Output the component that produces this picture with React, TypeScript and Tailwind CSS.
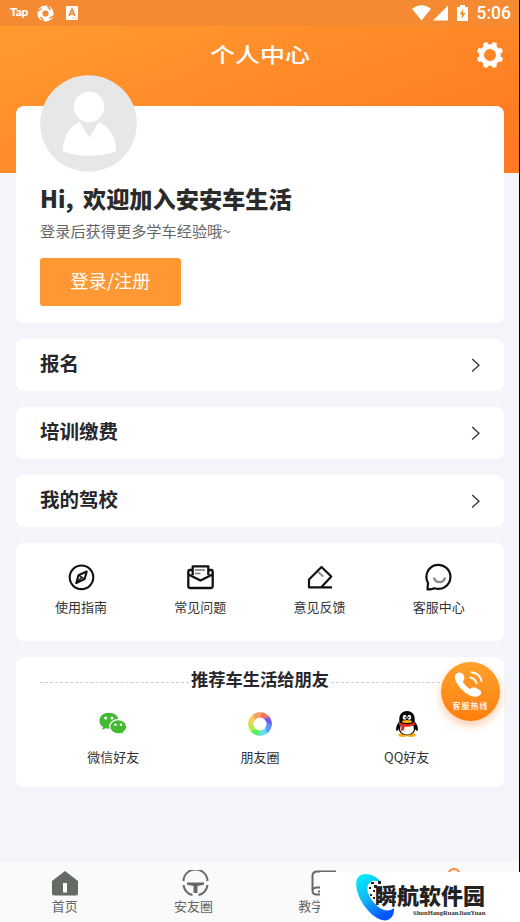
import type { ReactNode } from "react"

const menuItems = ["报名", "培训缴费", "我的驾校"]

const CompassIcon = () => (
    <svg width="28" height="28" viewBox="0 0 28 28" fill="none" stroke="#111" strokeWidth="2.1" strokeLinejoin="round">
        <circle cx="14.5" cy="14.3" r="11.8" />
        <path d="M19.700 8.500 17.600 16 9.300 20 11.500 12.200Z" />
        <path d="M11.500 12.200 17.600 16M15 14 9.300 20" strokeWidth="1.400" />
    </svg>
)

const MailIcon = () => (
    <svg width="28" height="28" viewBox="0 0 28 28" fill="none" stroke="#111" strokeWidth="2.3" strokeLinejoin="round">
        <path d="M6 7H4Q2.300 7 2.300 9V23Q2.300 25 4.300 25H24.700Q26.700 25 26.700 23V9Q26.700 7 25 7H23" />
        <path d="M6.700 12V3.300H22.300V12M2.500 11.500 14.500 17.500 26.500 11.500" />
        <path d="M9 7H19M9 10.500H14.500" stroke="#777" strokeWidth="1.3" />
    </svg>
)

const EraserIcon = () => (
    <svg width="28" height="28" viewBox="0 0 28 28" fill="none" stroke="#111" strokeWidth="2.2" strokeLinejoin="round">
        <path d="M26 24.300H3V16.500L15.500 4 25.300 13.500 15.300 24.300" />
        <path d="M12.300 9 17.300 13.700" stroke="#888" strokeWidth="1.800" />
    </svg>
)

const ChatIcon = () => (
    <svg width="28" height="28" viewBox="0 0 28 28" fill="none" stroke="#111" strokeWidth="2.2" strokeLinejoin="round">
        <path d="M2.500 26.400 3 19.800A12 12 0 1 1 9.500 25.200Q6 26.700 2.500 26.400Z" />
        <path d="M9 14.500A5.600 5.600 0 0 0 20 14.500" stroke="#888" strokeWidth="2.3" />
    </svg>
)

const WechatIcon = () => (
    <svg width="30" height="28" viewBox="0 0 30 28">
        <path d="M11 2.800C5.200 2.800 1.400 6.300 1.400 10.800c0 2.600 1.300 4.800 3.600 6.300L4.100 20l3.600-1.800c1.100.3 2.200.5 3.300.5 5.400 0 9.500-3.600 9.500-8.100S16.500 2.800 11 2.800Z" fill="#43b934" />
        <path d="M20.200 9.700c-4.900 0-8.500 3.100-8.500 7s3.600 7.200 8.500 7.200c1 0 1.900-.1 2.700-.4l3.200 1.700-.9-2.900c2.100-1.300 3.500-3.300 3.500-5.600 0-3.900-3.600-7-8.500-7Z" fill="#43b934" stroke="white" strokeWidth="1.200" />
        <circle cx="7.600" cy="8" r="1.500" fill="white" />
        <circle cx="14" cy="8" r="1.500" fill="white" />
        <circle cx="17.400" cy="14.800" r="1.300" fill="white" />
        <circle cx="23" cy="14.800" r="1.300" fill="white" />
    </svg>
)

const MomentsIcon = () => {
    const blades = ["#f27563", "#7657e8", "#5b98f4", "#62def2", "#58ee62", "#b9e955", "#f0d35b", "#f8a15f"]
    return (
        <svg width="28" height="28" viewBox="0 0 28 28">
            {blades.map((color, i) => (
                <path key={color} d="M14 2.300A11.700 11.700 0 0 1 22.270 5.730L15.400 8.700 11.250 9.240Z" fill={color} stroke={color} strokeWidth=".3" transform={`rotate(${45 * i + 10} 14 14)`} />
            ))}
            <circle cx="14" cy="14" r="6.500" fill="white" />
        </svg>
    )
}

const PenguinIcon = () => (
    <svg width="28" height="28" viewBox="0 0 28 28">
        <ellipse cx="9.700" cy="25" rx="4.300" ry="1.900" fill="#f9ad10" />
        <ellipse cx="18.300" cy="25" rx="4.300" ry="1.900" fill="#f9ad10" />
        <path d="M14 1C8.700 1 6.300 4.700 6.300 9v2.500C3.900 14.300 2.300 18.200 3.500 21c.9 0 1.700-1 2.200-2 .7 4 4 6.200 8.300 6.200s7.600-2.200 8.300-6.200c.5 1 1.300 2 2.200 2 1.200-2.800-.4-6.700-2.800-9.500V9C21.700 4.700 19.300 1 14 1Z" fill="#080808" />
        <path d="M8 15h12c2.500 5.500-.7 9.600-6 9.600S5.500 20.500 8 15Z" fill="white" />
        <ellipse cx="11.700" cy="7.200" rx="1.900" ry="2.500" fill="white" />
        <ellipse cx="16.300" cy="7.200" rx="1.900" ry="2.500" fill="white" />
        <circle cx="12.400" cy="7.500" r=".8" />
        <circle cx="15.700" cy="7.500" r=".8" />
        <ellipse cx="14" cy="11.500" rx="5" ry="1.500" fill="#f9ad10" />
        <path d="M6.200 12c4.500 3 11 3 15.500 0l.8 2.600c-3.200 2-7 2.400-11 2.200L11 20.500H7.800l.5-4.500L5.500 14.500Z" fill="#df2e20" />
    </svg>
)

const services: { label: string; icon: ReactNode }[] = [
    { label: "使用指南", icon: <CompassIcon /> },
    { label: "常见问题", icon: <MailIcon /> },
    { label: "意见反馈", icon: <EraserIcon /> },
    { label: "客服中心", icon: <ChatIcon /> },
]

const shareTargets: { label: string; icon: ReactNode }[] = [
    { label: "微信好友", icon: <WechatIcon /> },
    { label: "朋友圈", icon: <MomentsIcon /> },
    { label: "QQ好友", icon: <PenguinIcon /> },
]

const StatusBar = () => (
    <div className="flex h-[26px] items-center bg-[#f48a32] pl-2.5 pr-2 text-white">
        <span className="w-[27px] pb-0.5 font-[Lato] text-[12px] font-black leading-none tracking-[-0.3px]">Tap</span>
        <svg width="17" height="17" viewBox="0 0 17 17">
            <circle cx="8.500" cy="8.500" r="5.600" fill="none" stroke="white" strokeWidth="5" />
            <path d="M1 6 5 3.500M10.500 1 13.500 5M16 11 12 13.500M6.500 16 3.500 12" stroke="#f48a32" strokeWidth="1.400" />
        </svg>
        <svg className="ml-3" width="12" height="14" viewBox="0 0 12 14">
            <rect width="12" height="14" rx=".8" fill="white" />
            <path d="M3 10 6 3.200 9 10M4.200 8H8" fill="none" stroke="#f48a32" strokeWidth="1.700" />
            <path d="M6.500 12H11" stroke="#f48a32" strokeWidth=".8" strokeDasharray="1" />
        </svg>
        <div className="ml-auto flex items-center">
            <svg width="19" height="16" viewBox="0 0 19 16">
                <path d="M0 3.700Q9.500-3 19 3.700L9.500 15.500Z" fill="white" />
            </svg>
            <svg className="ml-0.5" width="15" height="16" viewBox="0 0 15 16">
                <path d="M15 .5V15.500H0Z" fill="white" />
            </svg>
            <svg className="ml-[9px]" width="11" height="16" viewBox="0 0 11 16">
                <path d="M3 0H8V2H11V16H0V2H3Z" fill="white" />
                <path d="M6.500 4 2.500 9.500H5L4.500 14 8.500 8H6Z" fill="#f48a32" />
            </svg>
            <span className="ml-[9px] font-[Roboto] text-[17.500px] font-medium leading-[26px]">5:06</span>
        </div>
    </div>
)

const Header = () => (
    <header className="h-[173px] bg-[linear-gradient(160deg,#ff9a2f_10%,#ff7a21_90%)]">
        <StatusBar />
        <div className="relative flex h-[57px] items-center justify-center text-white">
            <h1 className="scale-x-[1.220] text-[20.500px] font-medium leading-none">个人中心</h1>
            <svg className="absolute right-[15px] top-[15px]" width="28" height="28" viewBox="0 0 28 28">
                <circle cx="14" cy="14" r="8.400" fill="none" stroke="white" strokeWidth="4.800" />
                {[22.5, 67.5, 112.5, 157.5, 202.5, 247.5, 292.5, 337.5].map((angle) => (
                    <rect key={angle} x="11.500" y=".7" width="5" height="5" rx="1.500" fill="white" transform={`rotate(${angle} 14 14)`} />
                ))}
            </svg>
        </div>
    </header>
)

const ProfileCard = () => (
    <section className="h-[217px] rounded-lg bg-white px-6">
        <svg className="relative -top-[31px] -mb-[31px]" width="98" height="98" viewBox="0 0 98 98">
            <circle cx="48.500" cy="48.500" r="48.300" fill="#e7e7e7" />
            <circle cx="49" cy="32" r="15.200" fill="white" />
            <path d="M39.500 47 49.200 62.500 59 47C69 51.500 76.500 62 76 76.500Q49 85 23 76.500C22.500 62 29.500 51.500 39.500 47Z" fill="white" />
        </svg>
        <h2 className="mt-[9px] flex h-8 items-center whitespace-nowrap text-[23.200px] font-black leading-8 text-[#2b2b2b]">
            <span className="w-[43px]">Hi,</span>
            <span>欢迎加入安安车生活</span>
        </h2>
        <p className="mt-1 text-[15.200px] leading-6 text-[#666]">登录后获得更多学车经验哦~</p>
        <button className="mt-4 flex h-12 w-[141px] items-center justify-center rounded-[3px] bg-[#ff9833] pb-[3px] text-[18.300px] text-white">登录/注册</button>
    </section>
)

const ServiceCard = () => (
    <section className="grid h-[98px] grid-cols-4 rounded-lg bg-white px-[5.500px] pt-5">
        {services.map((item) => (
            <div key={item.label} className="flex flex-col items-center">
                {item.icon}
                <span className="mt-1.5 text-[13px] leading-5 text-[#333]">{item.label}</span>
            </div>
        ))}
    </section>
)

const ShareCard = () => (
    <section className="h-[130px] rounded-lg bg-white px-6 pt-2.5">
        <div className="flex h-7 items-center">
            <span className="mt-0.5 flex-1 border-t border-dashed border-[#ccc]" />
            <h3 className="px-0.5 pb-1 text-[17.300px] font-bold leading-6 text-[#26262b]">推荐车生活给朋友</h3>
            <span className="mt-0.5 flex-1 border-t border-dashed border-[#ccc]" />
        </div>
        <div className="mt-[15px] grid grid-cols-3">
            {shareTargets.map((item) => (
                <div key={item.label} className="flex flex-col items-center">
                    {item.icon}
                    <span className="mt-[9px] text-[13px] leading-5 text-[#333]">{item.label}</span>
                </div>
            ))}
        </div>
    </section>
)

const HotlineButton = () => (
    <button className="absolute left-[441px] top-[662px] flex h-[59px] w-[59px] flex-col items-center rounded-full bg-linear-to-b from-[#ffa12b] to-[#ff7e0b] pt-2 text-white shadow-[0_4px_10px_rgba(255,125,30,0.400)]">
        <svg className="-ml-1" width="32" height="30" viewBox="0 0 32 30" fill="none" stroke="white">
            <path d="M3 4C6 1.500 9 2 10.500 5c1.200 3 1.300 4.300-.8 6.500 2 3.500 4 5.500 7.300 7.500 2.600-2 4.500-2.200 7-.5 4.500 2 5.500 4 3 6.500-4 3.500-11 1.500-16.500-4C4.500 15.500-.5 8 3 4Z" fill="white" stroke="none" />
            <path d="M17.500 7.500Q22 8.500 23.500 13M18.500 2.300Q27 3.500 28.500 11" strokeWidth="2" strokeLinecap="round" />
        </svg>
        <span className="mt-px whitespace-nowrap text-[8px] font-medium leading-[10px] tracking-[1px]">客服热线</span>
    </button>
)

const TabBar = () => (
    <nav className="mt-auto grid h-[60px] grid-cols-4 bg-[#fafafa] pt-2 text-[#666]">
        <div className="flex flex-col items-center">
            <svg width="28" height="26" viewBox="0 0 28 26">
                <path d="M14 1 27 11V23.500Q27 25.500 25 25.500H3Q1 25.500 1 23.500V11ZM12 13V22.500H16V13Z" fill="#646b65" fillRule="evenodd" />
            </svg>
            <span className="text-[13px] leading-[19px]">首页</span>
        </div>
        <div className="flex flex-col items-center">
            <svg width="28" height="26" viewBox="0 0 28 26" fill="none" stroke="#646b65">
                <path d="M2.500 11A12 11.500 0 0 1 26.500 11M2.500 15A12 12 0 0 0 11.500 25M26.500 15A12 12 0 0 1 17.500 25" strokeWidth="2" />
                <path d="M6 12.500H23V14.700L16.500 16V23H12.500V16L6 14.700Z" fill="#646b65" stroke="none" />
            </svg>
            <span className="pr-0.5 text-[13px] leading-[19px]">安友圈</span>
        </div>
        <div className="flex flex-col items-center">
            <svg width="28" height="26" viewBox="0 0 28 26" fill="none" stroke="#646b65" strokeWidth="2">
                <path d="M26 1.500H7Q2.500 1.500 2.500 6V20.500Q2.500 24.500 6.500 24.500H26M2.500 20Q3.500 17.500 7 17.500H26M8 21.500H13" />
            </svg>
            <span className="pr-[26px] text-[13px] leading-[19px]">教学</span>
        </div>
        <div className="flex flex-col items-center">
            <svg className="-mt-1" width="28" height="26" viewBox="0 0 28 26" fill="none" stroke="#ff873b" strokeWidth="1.800">
                <circle cx="14" cy="9" r="6" />
            </svg>
        </div>
    </nav>
)

const SiteBadge = () => (
    <div className="absolute bottom-0 right-0 flex h-[50px] w-[200px] bg-white">
        <svg className="ml-9 shrink-0" width="40" height="50" viewBox="0 0 40 50">
            <defs>
                <linearGradient id="swoosh" x1="0" y1="0" x2=".6" y2="1">
                    <stop offset="0" stopColor="#00f3ff" />
                    <stop offset=".5" stopColor="#10b8f5" />
                    <stop offset="1" stopColor="#0754ff" />
                </linearGradient>
            </defs>
            <path d="M26 11C18 1 5 -1 1 7C-3 19 9 40 23 47C31 51 39 46 38 36C30 43 18 34 13 23C8 12 16 5 26 11Z" fill="url(#swoosh)" />
            <path d="M15 10h3v2h-3zM18 13h3v3h-3zM22 9h3v3h-3zM13 15h2v2h-2zM17 18h2v2h-2zM21 17h3v3h-3zM14 22h2v2h-2zM17 25h2v2h-2z" fill="#222" />
        </svg>
        <div className="-ml-[21px] flex w-[112px] flex-col">
            <span className="mt-[7px] whitespace-nowrap text-[22px] font-black leading-[30px] text-[#222]">瞬航软件园</span>
            <span className="-mt-px whitespace-nowrap pl-[38px] font-['Liberation_Serif'] text-[6.600px] font-bold leading-[9px] text-[#333]">ShunHangRuanJianYuan</span>
        </div>
    </div>
)

const App = () => {
    return (
        <div className="relative h-[922px] w-[520px] overflow-hidden bg-[#f4f5fa] font-['Noto_Sans_CJK_SC',sans-serif]">
            <div className="flex h-full flex-col border-r border-black">
                <Header />
                <main className="-mt-[67px] flex flex-col gap-4 pl-4 pr-[15px]">
                    <ProfileCard />
                    {menuItems.map((label) => (
                        <section key={label} className="flex h-[52px] items-center justify-between rounded-lg bg-white pl-6 pr-[23px]">
                            <h3 className="pb-1 text-[19.500px] font-bold leading-7 text-[#26262b]">{label}</h3>
                            <svg width="10" height="14" viewBox="0 0 10 14" fill="none" stroke="#333" strokeWidth="1.300">
                                <path d="M1.200 1 8 7.200 1.200 13.500" />
                            </svg>
                        </section>
                    ))}
                    <ServiceCard />
                    <ShareCard />
                </main>
                <TabBar />
            </div>
            <HotlineButton />
            <SiteBadge />
        </div>
    )
}

export default App
